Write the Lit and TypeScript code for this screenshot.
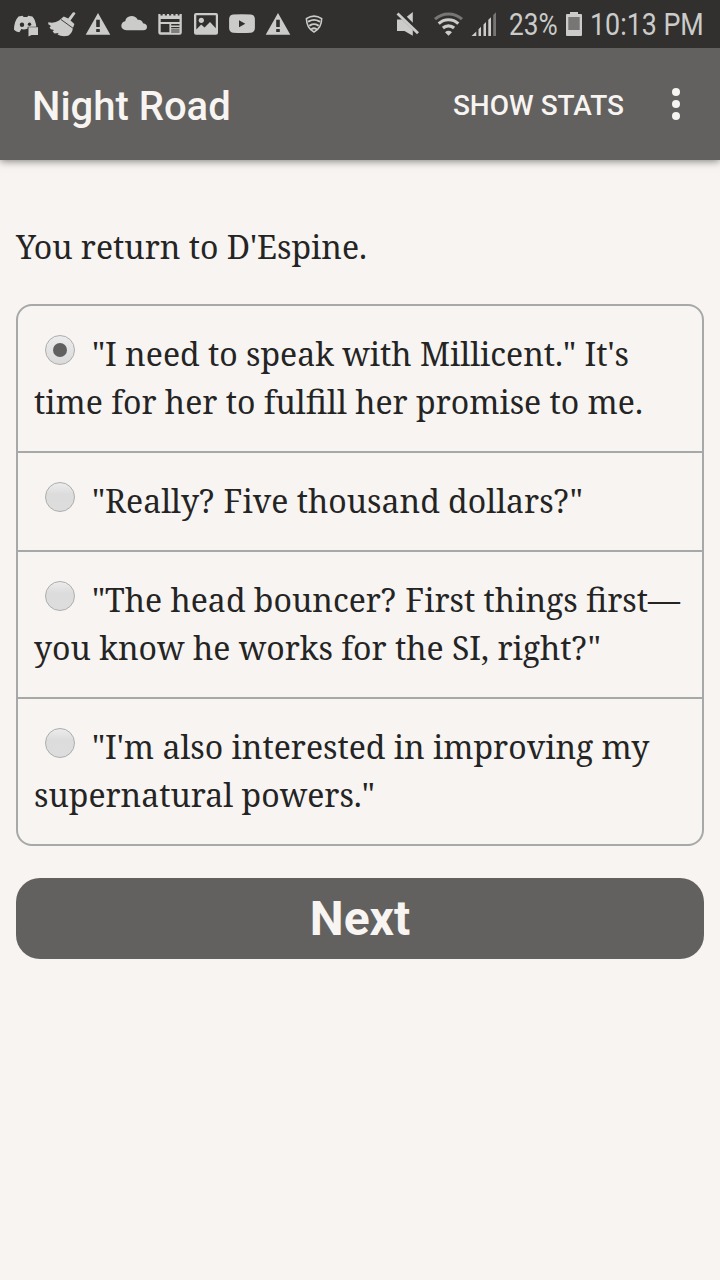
import { LitElement, html, css, svg } from "lit";
import { customElement } from "lit/decorators.js";

// Each status icon is drawn in screen coordinates and clipped by its own viewBox.
const icon = (x: number, w: number, body: unknown) =>
  html`<svg class="ic" width=${w} height="48" viewBox="${x} 0 ${w} 48">${body}</svg>`;

const warn = (cx: number) => svg`<path fill-rule="evenodd" d="M${cx} 13 L${cx + 12.3} 34.7 H${cx - 12.3}Z M${cx - 1.8} 19.8 V27 H${cx + 1.8} V19.8Z M${cx - 1.8} 29 V32 H${cx + 1.8} V29Z"/>`;

const left = [
  svg`<path d="M18.5 16.4 L22.6 15.8 L23.6 17 H27.2 L28.2 15.8 L32.4 16.4 Q35.6 20 36.3 26.8 H27.6 V30 H20.8 L19.4 32.3 Q16 32 14 29.8 Q14 21 18.5 16.4Z"/><g fill="#31302e"><circle cx="22" cy="24.8" r="2.2"/><circle cx="29.5" cy="24.3" r="1.7"/><path d="M21 29 Q24 30 28 28.4 V32 H21Z"/></g><path d="M28.5 27.3 H38 V35 H31.6 L28.5 36.4Z"/>`,
  svg`<path d="M72.8 12.6 Q74.4 11.6 75.5 13.4 L70.5 20.4 L74.4 24 L72.8 28.6 Q72.4 33 68.2 35.8 Q62 37.2 57.5 34.6 L58.8 33 L54.5 33.4 L52.6 31.6 L54 30 L50.8 29.2 L49.6 27.2 L51 26 L48.3 24.3 V22.3 Q55 23.5 59 20.6 L63.8 16.4 L68.2 18.6Z"/><path fill="none" stroke="#31302e" stroke-width="0.9" d="M60.8 19.4 L73 28.2"/>`,
  warn(98),
  svg`<path d="M126.5 30.2 Q121.3 29.8 121.3 25.8 Q121.5 22 125.2 21.2 Q126 16.2 131.5 16 Q135.8 16 137.7 19.7 Q142 19.3 143 23.3 Q147 24 147 27 Q146.8 30.2 143.2 30.2Z"/>`,
  svg`<path fill-rule="evenodd" d="M158.3 14 H160.5 V15.5 H162.6 V14 H164.8 V15.5 H166.9 V14 H169.1 V15.5 H171.2 V14 H173.4 V15.5 H175.5 V14 H177.7 V15.5 H179.5 V14 H181.8 V32.5 Q181.8 34.7 179.6 34.7 H160.5 Q158.3 34.7 158.3 32.5Z M160.7 19 V22 H179.5 V19Z M160.7 24 V32.3 H169.4 V24Z M171.2 24 V25.5 H179.5 V24Z M171.2 27 V28.3 H179.5 V27Z M171.2 29.4 V30.5 H179.5 V29.4Z M171.2 31.5 V32.4 H179.5 V31.5Z"/>`,
  svg`<path fill-rule="evenodd" d="M196 13 H216 Q218 13 218 15 V32.8 Q218 34.8 216 34.8 H196 Q194 34.8 194 32.8 V15 Q194 13 196 13Z M196.3 15.3 V29.5 L201.2 24.5 L204.5 27.5 L210 22 L215.8 28.3 V15.3Z"/><circle cx="201.3" cy="20.3" r="2.6"/>`,
  svg`<path fill-rule="evenodd" d="M233 14.6 Q242 14 251 14.6 Q254.7 15 254.9 19 V28 Q254.7 32.3 251 32.7 Q242 33.3 233 32.7 Q229.3 32.3 229.1 28 V19 Q229.3 15 233 14.6Z M239 20.3 V27.3 L245.3 23.8Z"/>`,
  warn(278),
  svg`<g fill="none" stroke="#cbcbc9" stroke-linecap="round"><path stroke-width="1.6" d="M306.4 18.6 Q314 13.6 321.7 18.6 C321.5 25 319.5 29.5 314 32 C308.6 29.5 306.6 25 306.4 18.6Z"/><path stroke-width="1.9" d="M308.8 21.4 Q314 18.4 319.3 21.4 M310 25.4 Q314 22.8 318 25.4 M311.7 29 Q314 27.4 316.3 29"/></g>`,
];

// Segments of a line are set apart by a pixel where the pair is not kerned.
const choices: string[][][] = [
  [['"I need to speak with Millicent." It\'s'], ["time for her to fulfill her promise to me."]],
  [['"Really? ', 'Five thousand dollars?', '"']],
  [['"The head bouncer? ', 'First things first—'], ['you know he works for the SI, right?', '"']],
  [['"I\'m also interested in improving my'], ['supernatural powers."']],
];

@customElement("app-root")
export class AppRoot extends LitElement {
  static styles = css`
    :host { display: flex; flex-direction: column; width: 720px; height: 1280px; background: #f7f4f1; color: #242424; overflow: hidden; }
    .status { height: 48px; flex: none; display: flex; align-items: center; background: #31302e; color: #cbcbc9; padding-left: 8px; font: 31px/48px Roboto, sans-serif; }
    .ic { display: block; flex: none; fill: #cbcbc9; }
    .space { flex: 1; }
    .pct { width: 53px; }
    .clock { width: 130px; }
    .narrow { display: block; transform-origin: 0 50%; transform: scaleX(0.865); white-space: nowrap; padding-top: 1px; }
    .pct .narrow { transform: scaleX(0.845); }
    .bar { height: 112px; flex: none; display: flex; align-items: center; background: #62615f; color: #f7f4f1; font-family: Roboto, sans-serif; font-weight: 500; padding-left: 32px; box-shadow: 0 1px 8px rgba(0,0,0,.5); position: relative; }
    .title { font-size: 40px; line-height: 48px; padding-top: 5px; flex: 1; }
    .stats { font-size: 28px; line-height: 40px; padding-top: 4px; margin-right: 48px; }
    .dots { fill: #f7f4f1; margin-right: 40px; display: block; }
    main { padding: 63px 16px 0; font: 32px/48px "Noto Serif", "Droid Serif", "DejaVu Serif Condensed", serif; }
    .status { z-index: 1; position: relative; }
    p { margin: 0 0 33px; white-space: nowrap; }
    .list { border: 2px solid #a7a8a8; border-radius: 16px; }
    .row { padding: 24px 16px 25px; }
    .row + .row { border-top: 2px solid #a7a8a8; }
    .line { display: flex; height: 48px; white-space: pre; }
    .seg + .seg { margin-left: 1px; }
    .radio { box-sizing: border-box; width: 30px; height: 30px; margin: 5px 17px 0 11px; border: 1px solid #adadad; border-radius: 50%; background: linear-gradient(#ececec, #dcdcdc 40%, #dddddd); display: grid; place-items: center; flex: none; }
    .radio.on { background: linear-gradient(#ececec, #dadada); }
    .dot { width: 14px; height: 14px; border-radius: 50%; background: #606060; }
    .next { display: block; width: 688px; height: 81px; margin-top: 32px; padding: 0; border: 0; border-radius: 24px; background: #62615f; color: #f7f4f1; font: 700 48px/81px Roboto, sans-serif; }
  `;

  render() {
    return html`
      <div class="status">
        ${left.map((b, i) => icon(8 + i * 36, 36, b))}
        <span class="space"></span>
        ${icon(390, 36, svg`<path d="M397 19.5 H402 L412.8 30 V35.8 L404.5 31 H397Z M406.8 16.8 L412.8 12 V22.8Z"/><path d="M397.5 13.5 L418 33.2" stroke="#cbcbc9" stroke-width="2.8"/>`)}
        ${icon(426, 42, svg`<g fill="none" stroke="#cbcbc9" stroke-width="3.1"><path stroke="#777674" d="M435 19.2 A20 20 0 0 1 462 19.2"/><path d="M438.7 23.7 A14.3 14.3 0 0 1 458.3 23.7 M442.9 28 A8.3 8.3 0 0 1 454.1 28"/></g><path d="M445 32.2 Q448.5 29.4 452 32.2 L448.5 35.8Z"/>`)}
        ${icon(468, 41, svg`<path d="M471.5 36 L476.3 31.5 V36Z M478.5 29.3 L481 26.8 V36 H478.5Z M483.5 24.5 L486 22 V36 H483.5Z M488.3 19.8 L491 17.2 V36 H488.3Z"/><path fill="#777674" d="M493.2 15 L496 12.2 V36 H493.2Z"/>`)}
        <span class="pct"><span class="narrow">23%</span></span>
        ${icon(562, 28, svg`<path d="M570 12 H578 V14 H581 Q582 14 582 15 V35 Q582 36 581 36 H567 Q566 36 566 35 V15 Q566 14 567 14 H570Z"/><path fill="#777674" d="M568.3 17 H579.7 V30 H568.3Z"/>`)}
        <span class="clock"><span class="narrow">10:13 PM</span></span>
      </div>
      <div class="bar">
        <span class="title">Night Road</span>
        <span class="stats">SHOW STATS</span>
        <svg class="dots" width="8" height="32" viewBox="0 0 8 32" overflow="visible"><circle cx="4" cy="4" r="4"/><circle cx="4" cy="16" r="4"/><circle cx="4" cy="28" r="4"/></svg>
      </div>
      <main>
        <p>You return to D'Espine.</p>
        <div class="list">
          ${choices.map((lines, i) => html`<div class="row">${lines.map((segs, j) => html`<div class="line">${j === 0 ? html`<span class="radio ${i === 0 ? "on" : ""}">${i === 0 ? html`<span class="dot"></span>` : ""}</span>` : ""}${segs.map((t) => html`<span class="seg">${t}</span>`)}</div>`)}</div>`)}
        </div>
        <button class="next">Next</button>
      </main>`;
  }
}
